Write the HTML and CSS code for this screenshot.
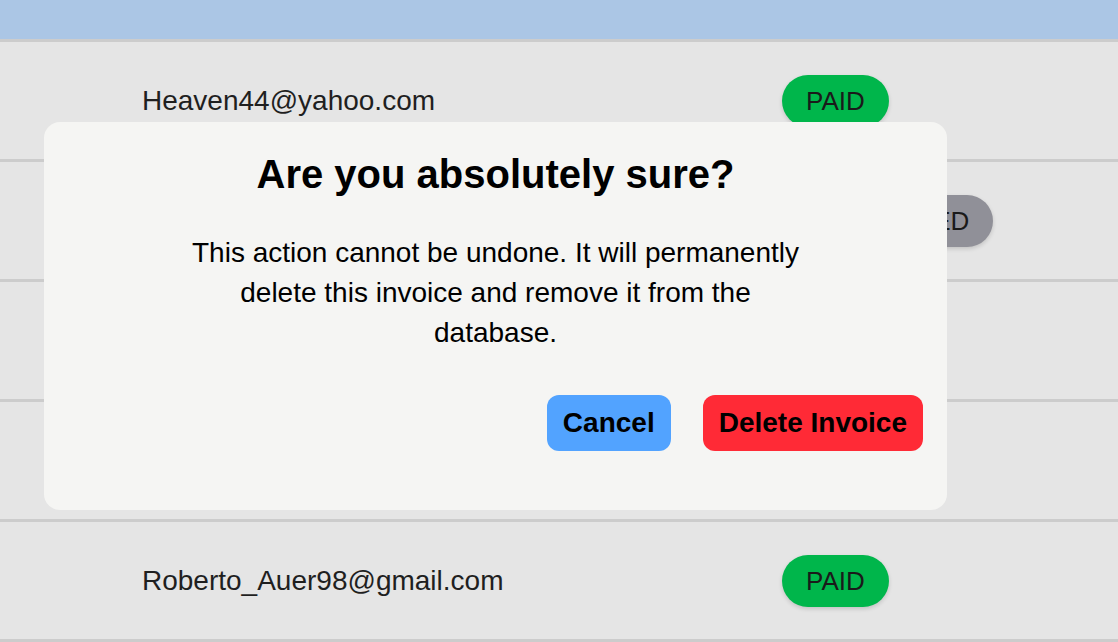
FILE: index.html
```html
<!DOCTYPE html>
<html lang="en">
<head>
<meta charset="utf-8">
<title>Invoices</title>
<link rel="stylesheet" href="styles.css">
</head>
<body>
<div class="page">
  <header class="topbar"></header>
  <div class="list">
    <div class="row">
      <span class="email">Heaven44@yahoo.com</span>
      <span class="badge paid">PAID</span>
    </div>
    <div class="row">
      <span class="email">Lorenzo.Kuhn@hotmail.com</span>
      <span class="badge processed">PROCESSED</span>
    </div>
    <div class="row">
      <span class="email"></span>
      <span class="badge paid">PAID</span>
    </div>
    <div class="row">
      <span class="email">Jaylen.Ortiz@gmail.com</span>
      <span class="badge paid">PAID</span>
    </div>
    <div class="row">
      <span class="email">Roberto_Auer98@gmail.com</span>
      <span class="badge paid">PAID</span>
    </div>
  </div>

  <div class="dialog" role="alertdialog">
    <h2 class="dialog-title">Are you absolutely sure?</h2>
    <p class="dialog-text">This action cannot be undone. It will permanently delete this invoice and remove it from the database.</p>
    <div class="dialog-actions">
      <button class="btn btn-cancel">Cancel</button>
      <button class="btn btn-delete">Delete Invoice</button>
    </div>
  </div>
</div>
</body>
</html>
```

FILE: styles.css
```css
* { box-sizing: border-box; }

html, body {
  margin: 0;
  padding: 0;
}

body {
  font-family: "Liberation Sans", Arial, sans-serif;
  background: #e5e5e5;
  color: #1f1f1f;
  overflow: hidden;
}

.page {
  position: relative;
  width: 1118px;
  height: 642px;
}

.topbar {
  height: 42px;
  background: #abc6e5;
  border-bottom: 3px solid #cccccc;
}

.list {
  display: flex;
  flex-direction: column;
}

.row {
  height: 120px;
  border-bottom: 3px solid #cccccc;
  display: grid;
  grid-template-columns: 640px auto;
  align-items: center;
  padding-left: 142px;
  background: #e5e5e5;
}

.email {
  font-size: 28px;
  color: #1f1f1f;
}

.badge {
  justify-self: start;
  font-size: 26px;
  line-height: 30px;
  padding: 11px 24px;
  border-radius: 999px;
  color: #1a1a1a;
  box-shadow: 0 2px 4px rgba(0, 0, 0, 0.15);
}

.badge.paid { background: #00b64b; }
.badge.processed { background: #909098; }

.dialog {
  position: absolute;
  left: 44px;
  top: 122px;
  width: 903px;
  height: 388px;
  background: #f5f5f3;
  border-radius: 16px;
  padding: 30px 24px 0 24px;
  display: flex;
  flex-direction: column;
  align-items: center;
  color: #000;
}

.dialog-title {
  margin: 0;
  font-size: 40px;
  line-height: 44px;
  font-weight: bold;
  text-align: center;
}

.dialog-text {
  margin: 37px 0 0 0;
  max-width: 630px;
  font-size: 28px;
  line-height: 40px;
  text-align: center;
}

.dialog-actions {
  align-self: flex-end;
  display: flex;
  gap: 32px;
  margin-top: 42px;
}

.btn {
  font-family: "Liberation Sans", Arial, sans-serif;
  font-size: 28px;
  font-weight: bold;
  line-height: 32px;
  padding: 12px 16px;
  border: none;
  border-radius: 12px;
  color: #000;
  cursor: pointer;
}

.btn-cancel { background: #52a3ff; }
.btn-delete { background: #ff2a36; }
```
